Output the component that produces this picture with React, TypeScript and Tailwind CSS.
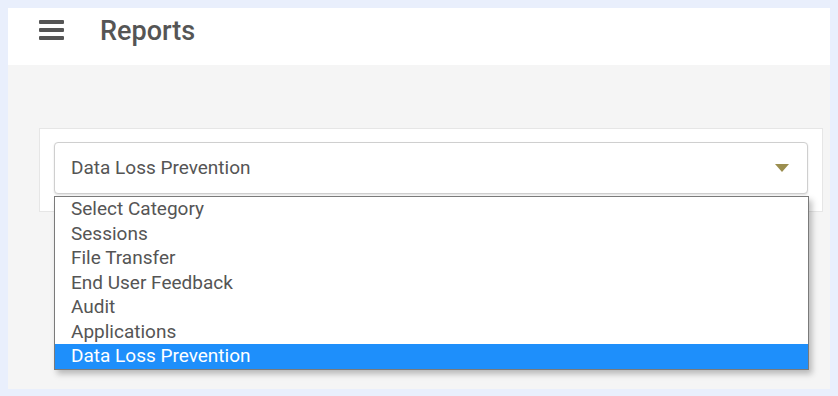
const options = [
  "Select Category",
  "Sessions",
  "File Transfer",
  "End User Feedback",
  "Audit",
  "Applications",
  "Data Loss Prevention",
];

export default function App() {
  const selected = "Data Loss Prevention";
  return (
    <div className="w-[838px] h-[396px] bg-[#e9effc] p-2 font-['Roboto',sans-serif]">
      <div className="flex h-[381px] w-[822px] flex-col bg-[#f5f5f5]">
        <header className="flex h-[57px] items-start bg-white pl-[31px] pt-[12px]">
          <div className="flex w-[25px] flex-col gap-[4px]">
            <span className="h-[4px] rounded-[1px] bg-[#555]" />
            <span className="h-[4px] rounded-[1px] bg-[#555]" />
            <span className="h-[4px] rounded-[1px] bg-[#555]" />
          </div>
          <h1 className="ml-[36px] -mt-[5px] text-[27px] font-medium leading-[32px] text-[#555]">Reports</h1>
        </header>

        <div className="pl-[31px] pr-[7px] pt-[63px]">
          <div className="h-[84px] border border-[#e6e6e6] bg-white px-[14px] pt-[13px]">
            <div className="relative">
              <div className="flex h-[52px] items-center justify-between rounded-[4px] border border-[#cfcfcf] bg-white pl-[16px] pr-[18px] shadow-[0_1px_2px_rgba(0,0,0,0.12)]">
                <span className="text-[19px] text-[#555]">{selected}</span>
                <svg width="14" height="8" viewBox="0 0 14 8">
                  <path d="M0 0 L14 0 L7 8 Z" fill="#9b8e4f" />
                </svg>
              </div>
              <ul className="absolute left-0 top-[54px] w-[755px] border border-[#7a7a7a] bg-white shadow-[3px_4px_6px_rgba(0,0,0,0.25)]">
                {options.map((o) => (
                  <li
                    key={o}
                    className={
                      o === selected
                        ? "h-[24.5px] bg-[#1e8ffb] pl-[16px] text-[19px] leading-[23px] text-white"
                        : "h-[24.5px] pl-[16px] text-[19px] leading-[23px] text-[#555]"
                    }
                  >
                    {o}
                  </li>
                ))}
              </ul>
            </div>
          </div>
        </div>
      </div>
    </div>
  );
}
